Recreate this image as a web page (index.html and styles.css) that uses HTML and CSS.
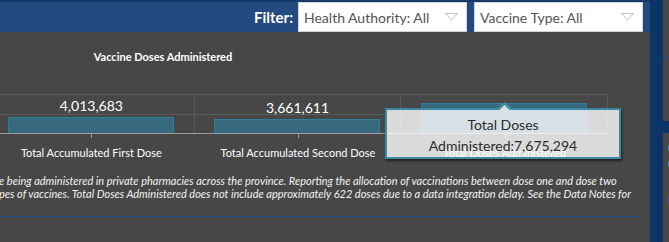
FILE: index.html
```html
<!DOCTYPE html>
<html lang="en">
  <head>
    <meta charset="UTF-8" />
    <meta name="viewport" content="width=device-width, initial-scale=1.0" />
    <title>Vaccine Doses Administered</title>
    <link rel="stylesheet" href="styles.css">
  </head>
  <body>
    <div class="page">
      <div class="main">
        <header class="toolbar">
          <span class="filter-label">Filter:</span>
          <div class="select">
            <span>Health Authority: All</span>
            <svg class="caret" width="13" height="8" viewBox="0 0 13 8"><path d="M0.5 0.5 L6.5 7 L12.5 0.5 Z" fill="none" stroke="#c4c4c4" stroke-width="1"/></svg>
          </div>
          <div class="select">
            <span>Vaccine Type: All</span>
            <svg class="caret" width="13" height="8" viewBox="0 0 13 8"><path d="M0.5 0.5 L6.5 7 L12.5 0.5 Z" fill="none" stroke="#c4c4c4" stroke-width="1"/></svg>
          </div>
        </header>

        <section class="panel">
          <h2 class="chart-title">Vaccine Doses Administered</h2>

          <div class="chart">
            <div class="plot">
              <div class="col">
                <span class="value">4,013,683</span>
                <div class="bar" style="height: 16px"></div>
              </div>
              <div class="col">
                <span class="value">3,661,611</span>
                <div class="bar" style="height: 14px"></div>
              </div>
              <div class="col">
                <div class="bar" style="height: 30px"></div>
              </div>
            </div>
            <div class="axis">
              <div class="cat">Total Accumulated First Dose</div>
              <div class="cat">Total Accumulated Second Dose</div>
              <div class="cat">Total Doses Administered</div>
            </div>

            <div class="tooltip">
              Total Doses<br>Administered:7,675,294
            </div>
          </div>

          <p class="note">
            e being administered in private pharmacies across the province. Reporting the allocation of vaccinations between dose one and dose two<br>
            pes of vaccines. Total Doses Administered does not include approximately 622 doses due to a data integration delay. See the Data Notes for
          </p>
          <div class="rule"></div>
        </section>
      </div>

      <aside class="side">
        <div class="gutter"></div>
        <div class="edge">
          <div class="edge-panel top"></div>
          <div class="edge-panel bottom">
            <i class="mark blue"></i>
            <i class="mark blue"></i>
            <i class="mark purple"></i>
          </div>
        </div>
      </aside>
    </div>
  </body>
</html>
```

FILE: styles.css
```css
:root {
  --panel: #474747;
  --header: #244a7f;
  --navy: #0d3466;
  --grid: #5b5b5b;
  --axis: #9c9c9c;
  --bar: #386a7f;
  --bar-border: #2f7f99;
}

* {
  margin: 0;
  padding: 0;
  box-sizing: border-box;
}

body {
  width: 669px;
  height: 242px;
  overflow: hidden;
  background-color: var(--navy);
  font-family: 'Lato', 'Liberation Sans', sans-serif;
  color: #fff;
}

.page {
  display: flex;
  height: 242px;
}

.main {
  width: 650px;
  background-color: var(--panel);
  overflow: hidden;
}

/* filter bar */
.toolbar {
  display: flex;
  justify-content: flex-end;
  align-items: stretch;
  height: 32px;
  padding-right: 7px;
  border-top: 2px solid #17396a;
  background-color: var(--header);
}

.filter-label {
  align-self: center;
  margin-right: 5px;
  font-size: 15px;
  font-weight: bold;
}

.select {
  display: flex;
  align-items: center;
  justify-content: space-between;
  width: 169px;
  height: 30px;
  padding: 0 8px 0 5px;
  margin-left: 7px;
  background-color: #fff;
  border: 1px solid #d4d4d4;
  color: #555;
  font-size: 14px;
}

.filter-label + .select {
  margin-left: 0;
}

/* chart */
.chart-title {
  margin-top: 18px;
  width: 326px;
  text-align: center;
  font-size: 11px;
  line-height: 14px;
  font-weight: bold;
}

.chart {
  position: relative;
  margin-top: 30px;
}

.plot {
  display: grid;
  grid-template-columns: repeat(3, 1fr);
  grid-template-rows: 38px;
  width: 620px;
  height: 40px;
  margin-left: -12px;
  border-top: 1px solid var(--grid);
  border-bottom: 1px solid var(--axis);
  background: linear-gradient(var(--grid), var(--grid)) 0 19px / 100% 1px no-repeat;
}

.col {
  display: flex;
  flex-direction: column;
  justify-content: flex-end;
  align-items: center;
  min-height: 0;
  border-right: 1px solid var(--grid);
}

.col:first-child {
  border-left: 1px solid var(--grid);
}

.value {
  font-size: 14px;
  line-height: 16px;
  margin-bottom: 3px;
}

.bar {
  flex-shrink: 0;
  width: 166px;
  background-color: var(--bar);
  border: 1px solid var(--bar-border);
  border-bottom: 0;
}

.axis {
  display: grid;
  grid-template-columns: repeat(3, 1fr);
  width: 620px;
  margin-left: -12px;
}

.cat {
  position: relative;
  padding-top: 12px;
  text-align: center;
  font-size: 11px;
  line-height: 13px;
}

.cat::before {
  content: '';
  position: absolute;
  top: 0;
  left: 50%;
  width: 1px;
  height: 4px;
  background-color: var(--axis);
}

.tooltip {
  position: absolute;
  top: 14px;
  left: 385px;
  width: 236px;
  height: 51px;
  padding-top: 4px;
  text-align: center;
  font-size: 14px;
  line-height: 21px;
  color: #2b2b2b;
  background-color: rgba(255, 255, 255, 0.8);
  border: 2px solid #3d88a3;
  box-shadow: 1px 2px 2px rgba(0, 0, 0, 0.55);
}

.tooltip::before {
  content: '';
  position: absolute;
  top: -6px;
  left: 113px;
  width: 7px;
  height: 7px;
  background-color: #d6e1e5;
  border-top: 2px solid #3d88a3;
  border-left: 2px solid #3d88a3;
  transform: rotate(45deg);
}

.note {
  margin-top: 15px;
  margin-left: -1px;
  white-space: nowrap;
  font-size: 11px;
  line-height: 13px;
  font-style: italic;
  color: #f2f2f2;
}

.rule {
  width: 640px;
  height: 1px;
  margin-top: 16px;
  background-color: #1c4a86;
}

/* neighbouring panel */
.side {
  display: flex;
  width: 19px;
}

.gutter {
  width: 13px;
  background-color: var(--navy);
}

.edge {
  display: flex;
  flex-direction: column;
  gap: 12px;
  width: 6px;
}

.edge-panel {
  background-color: var(--panel);
}

.edge-panel.top {
  height: 121px;
  background: linear-gradient(#28497a, #28497a) 0 57px / 100% 1px no-repeat, var(--panel);
}

.edge-panel.bottom {
  flex: 1;
  display: flex;
  flex-direction: column;
  align-items: flex-end;
  padding-top: 12px;
}

.mark {
  width: 1px;
  height: 6px;
  margin-bottom: 10px;
}

.mark.blue {
  background-color: #3f7fbf;
}

.mark.purple {
  margin-top: 20px;
  background-color: #5a4ba6;
}
```
